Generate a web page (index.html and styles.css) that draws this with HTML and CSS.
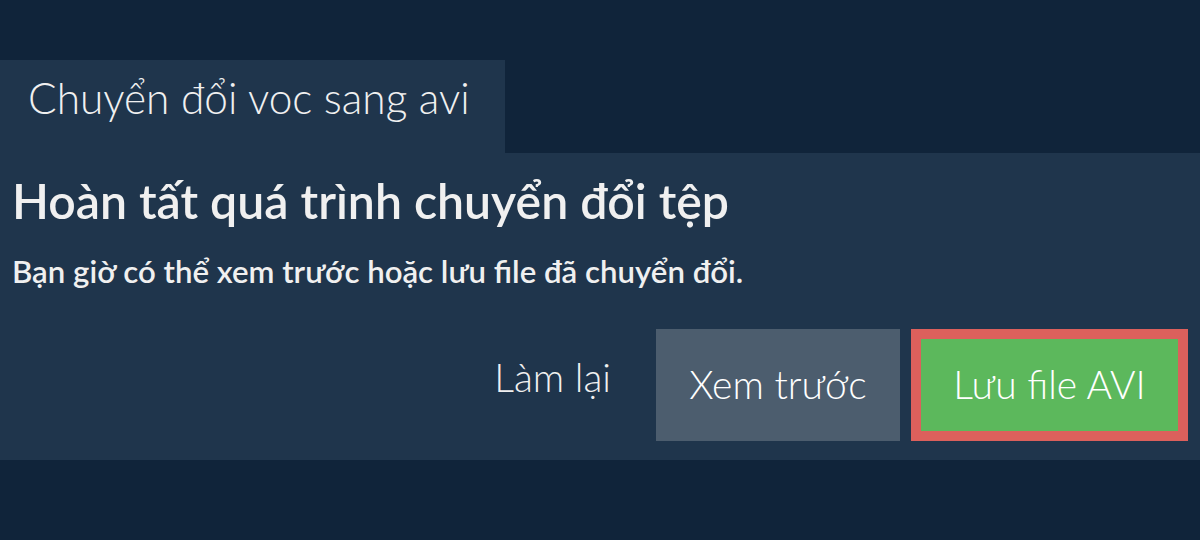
FILE: index.html
```html
<!DOCTYPE html>
<html lang="vi">
<head>
    <meta charset="UTF-8">
    <title>Chuyển đổi voc sang avi</title>
    <link rel="stylesheet" href="styles.css">
</head>
<body>
<div class="page">
    <div class="tab">Chuyển đổi voc sang avi</div>
    <div class="panel">
        <h1 class="title">Hoàn tất quá trình chuyển đổi tệp</h1>
        <p class="note">Bạn giờ có thể xem trước hoặc lưu file đã chuyển đổi.</p>
        <div class="actions">
            <a href="#" class="btn btn-link">Làm lại</a>
            <a href="#" class="btn btn-gray">Xem trước</a>
            <a href="#" class="btn btn-save">Lưu file AVI</a>
        </div>
    </div>
</div>
</body>
</html>
```

FILE: styles.css
```css
body {
    margin: 0;
    background: #10243a;
    color: #f0f0f0;
    font-family: Lato, "Noto Sans", sans-serif;
}

.page {
    padding-top: 60px;
}

.tab {
    width: 477px;
    height: 93px;
    padding-left: 28px;
    background: #1f354c;
    font-size: 42.4px;
    font-weight: 300;
    line-height: 76px;
}

.panel {
    height: 307px;
    padding: 0 12px;
    box-sizing: border-box;
    background: #1f354c;
}

.title {
    margin: 0;
    padding-top: 19px;
    font-size: 48.2px;
    font-weight: 600;
    line-height: 57px;
}

.note {
    margin: 24px 0 0;
    font-size: 31.2px;
    font-weight: 600;
    line-height: 37px;
}

.actions {
    display: flex;
    justify-content: flex-end;
    align-items: flex-start;
    gap: 11px;
    margin-top: 39px;
}

.btn {
    display: block;
    height: 112px;
    box-sizing: border-box;
    color: #fff;
    font-size: 39px;
    font-weight: 300;
    line-height: 110px;
    text-decoration: none;
}

.btn-link {
    margin-right: 34px;
    color: #f0f0f0;
    line-height: 97px;
}

.btn-gray {
    width: 244px;
    background: #4c5d6e;
    text-align: center;
}

.btn-save {
    width: 277px;
    border: 10px solid #dc605c;
    background: #5cb85c;
    line-height: 90px;
    text-align: center;
}
```
